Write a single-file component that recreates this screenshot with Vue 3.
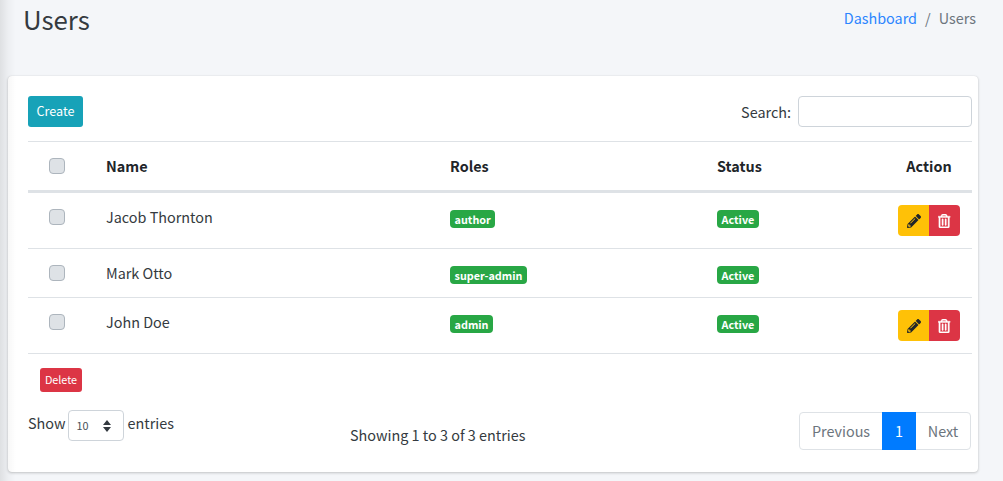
<script setup>
const users = [
  { id: 1, name: 'Jacob Thornton', role: 'author', actions: true, h: 'tall' },
  { id: 2, name: 'Mark Otto', role: 'super-admin', actions: false, h: 'short' },
  { id: 3, name: 'John Doe', role: 'admin', actions: true, h: 'tall' }
]
</script>

<template>
  <div class="page">
    <div class="edge"></div>
    <header class="head">
      <h1>Users</h1>
      <nav class="crumb"><a>Dashboard</a><span class="sep">/</span><span class="cur">Users</span></nav>
    </header>
    <section class="card">
      <div class="toolbar">
        <button class="btn create"><span>Create</span></button>
        <label class="search">Search:<input type="text" /></label>
      </div>
      <div class="row th">
        <div class="c0"><span class="check"></span></div>
        <div>Name</div>
        <div>Roles</div>
        <div>Status</div>
        <div class="act">Action</div>
      </div>
      <div v-for="u in users" :key="u.id" class="row td" :class="u.h">
        <div class="c0"><span class="check"></span></div>
        <div class="name">{{ u.name }}</div>
        <div class="bc"><span class="badge">{{ u.role }}</span></div>
        <div class="bc"><span class="badge">Active</span></div>
        <div class="act">
          <div v-if="u.actions" class="group">
            <button class="ib edit" aria-label="Edit">
              <svg viewBox="0 0 512 512" width="14" height="14"><path fill="#212529" d="M497.9 142.1l-46.1 46.1c-4.7 4.7-12.3 4.7-17 0l-111-111c-4.7-4.7-4.7-12.3 0-17l46.1-46.1c18.7-18.7 49.1-18.7 67.9 0l60.1 60.1c18.8 18.7 18.8 49.1 0 67.9zM284.2 99.8L21.6 362.4.4 483.9c-2.9 16.4 11.4 30.6 27.8 27.8l121.5-21.3 262.6-262.6c4.7-4.7 4.7-12.3 0-17l-111-111c-4.8-4.7-12.4-4.7-17.1 0zM124.1 339.9c-5.5-5.5-5.5-14.3 0-19.8l154-154c5.5-5.5 14.3-5.5 19.8 0s5.5 14.3 0 19.8l-154 154c-5.5 5.5-14.3 5.5-19.8 0zM88 424h48v36.3l-64.5 11.3-31.1-31.1L51.7 376H88v48z"/></svg>
            </button>
            <button class="ib del" aria-label="Delete">
              <svg viewBox="0 0 448 512" width="12.25" height="14"><path fill="#fff" stroke="#fff" stroke-width="14" d="M268 416h24a12 12 0 0 0 12-12V188a12 12 0 0 0-12-12h-24a12 12 0 0 0-12 12v216a12 12 0 0 0 12 12zM432 80h-82.41l-34-56.7A48 48 0 0 0 274.41 0H173.59a48 48 0 0 0-41.16 23.3L98.41 80H16A16 16 0 0 0 0 96v16a16 16 0 0 0 16 16h16v336a48 48 0 0 0 48 48h288a48 48 0 0 0 48-48V128h16a16 16 0 0 0 16-16V96a16 16 0 0 0-16-16zM171.84 50.91A6 6 0 0 1 177 48h94a6 6 0 0 1 5.15 2.91L293.61 80H154.39zM368 464H80V128h288zm-212-48h24a12 12 0 0 0 12-12V188a12 12 0 0 0-12-12h-24a12 12 0 0 0-12 12v216a12 12 0 0 0 12 12z"/></svg>
            </button>
          </div>
        </div>
      </div>
      <div class="bulk"><button class="btn delete">Delete</button></div>
      <div class="foot">
        <div class="len">
          <span class="lbl">Show</span>
          <div class="sel"><span>10</span>
            <svg viewBox="0 0 10 14" width="10" height="14"><path fill="#343a40" d="M5 1l4 5H1zM5 13L1 8h8z"/></svg>
          </div>
          <span class="lbl">entries</span>
        </div>
        <div class="info">Showing 1 to 3 of 3 entries</div>
        <div class="pager">
          <span class="pg prev">Previous</span>
          <span class="pg on">1</span>
          <span class="pg next">Next</span>
        </div>
      </div>
    </section>
  </div>
</template>

<style>
html, body { margin: 0; padding: 0; background: #f4f6f9; }
</style>

<style scoped>
* { box-sizing: border-box; }
.page {
  position: relative;
  width: 1003px;
  height: 481px;
  overflow: hidden;
  background: #f4f6f9;
  color: #212529;
  font-family: "Noto Sans CJK SC", "Source Sans Pro", sans-serif;
  font-size: 14.4px;
  line-height: 24px;
  padding: 0 25px 0 8px;
}
.edge {
  position: absolute;
  left: 0; top: 0; bottom: 0;
  width: 16px;
  z-index: 2;
  pointer-events: none;
  background: linear-gradient(to right, rgba(0,0,0,.09), rgba(0,0,0,.03) 50%, rgba(0,0,0,0));
}
.head {
  display: flex;
  justify-content: space-between;
  height: 76px;
  padding: 2px 2px 0 15px;
}
h1 {
  margin: 0;
  font-size: 25.8px;
  font-weight: 400;
  line-height: 34px;
  color: #343a40;
}
.crumb { display: flex; padding-top: 4px; height: 28px; }
.crumb a { color: #2b85ff; }
.sep { color: #6c757d; margin: 0 8px; }
.cur { color: #6c757d; }
.card {
  width: 970px;
  height: 396px;
  background: #fff;
  border-radius: 4px;
  box-shadow: 0 0 1px rgba(0,0,0,.125), 0 1px 3px rgba(0,0,0,.2);
  padding: 20px 6px 20px 20px;
}
.toolbar {
  display: flex;
  justify-content: space-between;
  align-items: flex-start;
  height: 45px;
}
.btn {
  display: block;
  border: 0;
  color: #fff;
  font-family: inherit;
  border-radius: 3px;
  padding: 0;
}
.create { background: #17a2b8; width: 55px; height: 31px; font-size: 12.6px; padding-bottom: 3px; }
.search { display: flex; align-items: center; gap: 7px; height: 31px; color: #343a40; }
.search input {
  width: 174px;
  height: 31px;
  border: 1px solid #ced4da;
  border-radius: 4px;
  background: #fff;
  outline: none;
}
.row {
  display: grid;
  grid-template-columns: 78px 344px 267px 181px 74px;
  width: 944px;
}
.c0 { display: flex; padding-left: 21px; }
.th {
  height: 52px;
  align-items: center;
  border-top: 1px solid #dee2e6;
  border-bottom: 3px solid #dee2e6;
  font-weight: 700;
}
.td {
  align-items: start;
  padding-top: 12px;
  border-bottom: 1px solid #dee2e6;
}
.td.tall { height: 56px; }
.td.short { height: 49px; }
.td .c0 { padding-top: 4px; }
.name { color: #343a40; }
.bc { display: flex; padding-top: 5px; }
.check {
  display: block;
  width: 16px;
  height: 16px;
  border: 1px solid #adb5bd;
  border-radius: 4px;
  background: #dee2e6;
}
.act { text-align: center; margin-left: -12px; width: 86px; }
.group { display: inline-flex; vertical-align: top; }
.ib {
  display: flex;
  align-items: center;
  justify-content: center;
  width: 31px;
  height: 31px;
  border: 0;
  padding: 0;
}
.edit { background: #ffc107; border-radius: 4px 0 0 4px; }
.del { background: #dc3545; border-radius: 0 4px 4px 0; }
.badge {
  display: block;
  background: #28a745;
  color: #fff;
  font-size: 10.8px;
  font-weight: 700;
  line-height: 12px;
  padding: 3px 4.6px;
  border-radius: 4px;
}
.bulk { padding: 14px 0 0 12px; height: 56px; }
.delete { background: #dc3545; width: 42px; height: 24px; font-size: 10.8px; padding-bottom: 3px; }
.foot {
  display: grid;
  grid-template-columns: 322px 1fr auto;
  align-items: start;
  padding-right: 1px;
  color: #343a40;
}
.len { display: flex; align-items: flex-start; gap: 3px; height: 31px; }
.lbl { padding-top: 1px; }
.sel {
  display: flex;
  align-items: center;
  justify-content: space-between;
  width: 56px;
  height: 31px;
  margin: 0 1px 0 -1px;
  border: 1px solid #ced4da;
  border-radius: 4px;
  padding: 0 11px 0 8px;
  font-size: 10.8px;
  color: #495057;
}
.sel span { margin-top: -1px; }
.info { padding-top: 13px; }
.pager {
  display: flex;
  height: 38px;
  margin-top: 2px;
  border: 1px solid #dee2e6;
  border-radius: 4px;
  color: #6c757d;
}
.pg { display: flex; align-items: center; justify-content: center; }
.prev { width: 82px; }
.on { width: 34px; background: #007bff; color: #fff; margin: -1px 0; }
.next { width: 54px; }
</style>
